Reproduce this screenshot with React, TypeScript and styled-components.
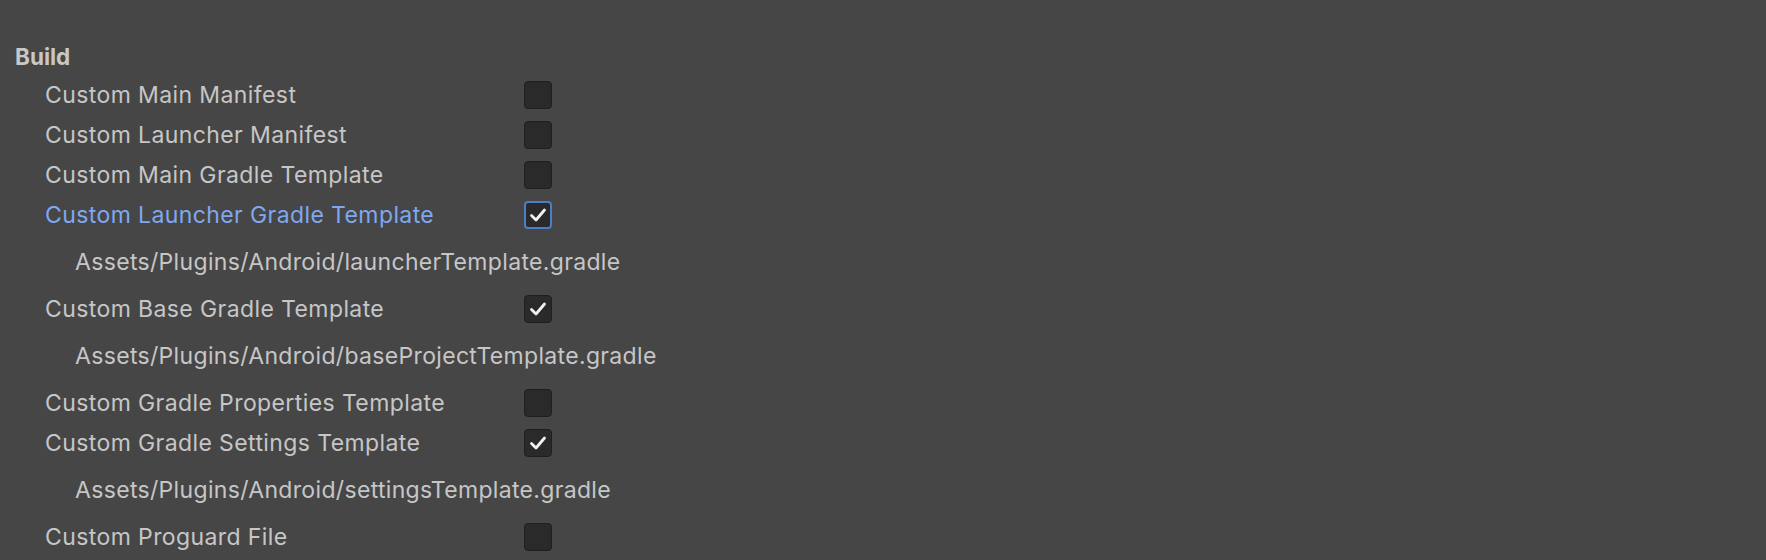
import React from "react";
import styled, { createGlobalStyle, css } from "styled-components";

const GlobalStyle = createGlobalStyle`
    html, body {
        margin: 0;
        padding: 0;
        background: #464646;
    }
    body {
        font-family: Inter, "Noto Sans", sans-serif;
        color: #c4c4c4;
    }
`;

type Item =
    | { kind: "toggle"; label: string; checked: boolean; focused?: boolean }
    | { kind: "path"; path: string };

const items: Item[] = [
    { kind: "toggle", label: "Custom Main Manifest", checked: false },
    { kind: "toggle", label: "Custom Launcher Manifest", checked: false },
    { kind: "toggle", label: "Custom Main Gradle Template", checked: false },
    { kind: "toggle", label: "Custom Launcher Gradle Template", checked: true, focused: true },
    { kind: "path", path: "Assets/Plugins/Android/launcherTemplate.gradle" },
    { kind: "toggle", label: "Custom Base Gradle Template", checked: true },
    { kind: "path", path: "Assets/Plugins/Android/baseProjectTemplate.gradle" },
    { kind: "toggle", label: "Custom Gradle Properties Template", checked: false },
    { kind: "toggle", label: "Custom Gradle Settings Template", checked: true },
    { kind: "path", path: "Assets/Plugins/Android/settingsTemplate.gradle" },
    { kind: "toggle", label: "Custom Proguard File", checked: false },
];

const Panel = styled.div`
    width: 1766px;
    height: 560px;
    box-sizing: border-box;
    padding: 38px 0 0 15px;
    overflow: hidden;
    background: #464646;
`;

const Header = styled.div`
    height: 37px;
    line-height: 37px;
    font-size: 22.5px;
    font-weight: 700;
    color: #c8c8c8;
`;

const List = styled.div`
    display: flex;
    flex-direction: column;
    padding-left: 30px;
`;

const Row = styled.div`
    display: grid;
    grid-template-columns: 479px 28px;
    align-items: center;
    height: 40px;
`;

const Label = styled.span<{ $focused?: boolean }>`
    font-size: 23px;
    line-height: 40px;
    letter-spacing: 0.4px;
    white-space: nowrap;
    color: ${(p) => (p.$focused ? "#80a8f0" : "#c6c6c6")};
`;

const PathLine = styled.div`
    padding: 7px 0 7px 30px;
    font-size: 23px;
    line-height: 40px;
    letter-spacing: 0.33px;
    color: #c6c6c6;
    white-space: nowrap;
`;

const Box = styled.div<{ $focused?: boolean }>`
    width: 28px;
    height: 28px;
    box-sizing: border-box;
    border-radius: 4px;
    background: #2a2a2a;
    border: 1px solid #1f1f1f;
    display: flex;
    align-items: center;
    justify-content: center;

    ${(p) =>
        p.$focused &&
        css`
            border: 2px solid #4c7dc7;
        `}
`;

const Check = () => (
    <svg width="20" height="20" viewBox="0 0 20 20">
        <polyline
            points="3.5,10.5 8,15 16.5,5"
            fill="none"
            stroke="#f2f2f2"
            strokeWidth="2.8"
            strokeLinecap="round"
            strokeLinejoin="round"
        />
    </svg>
);

const Toggle = ({ checked, focused }: { checked: boolean; focused?: boolean }) => (
    <Box $focused={focused}>{checked && <Check />}</Box>
);

export default function App() {
    return (
        <>
            <GlobalStyle />
            <Panel>
                <Header>Build</Header>
                <List>
                    {items.map((item, i) =>
                        item.kind === "toggle" ? (
                            <Row key={i}>
                                <Label $focused={item.focused}>{item.label}</Label>
                                <Toggle checked={item.checked} focused={item.focused} />
                            </Row>
                        ) : (
                            <PathLine key={i}>{item.path}</PathLine>
                        )
                    )}
                </List>
            </Panel>
        </>
    );
}
